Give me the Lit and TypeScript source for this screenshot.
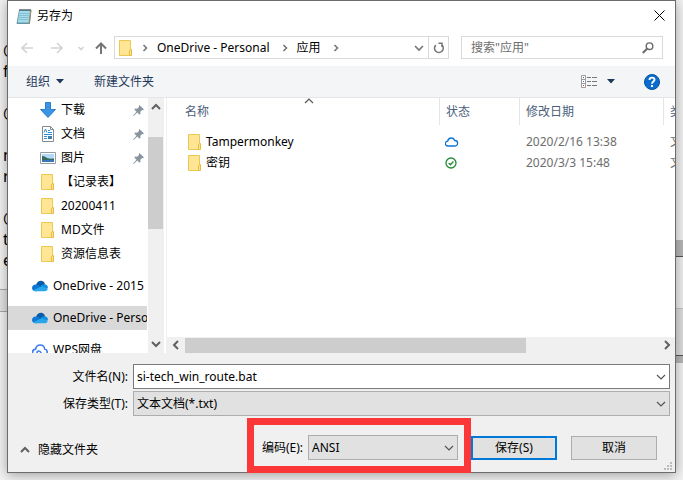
import { LitElement, html, svg, css, nothing } from "lit";
import { customElement, state } from "lit/decorators.js";

const folder = html`<svg class="icon" width="14" height="16" viewBox="0 0 14 16">
  <path d="M.5.500h11v15H.500z" fill="#ffe594" stroke="#ebc84f" />
  <path d="M10.500 15.500v-4.500l1-1.500h1v6z" fill="#ffe594" stroke="#e5bc3c" />
</svg>`;

const download = html`<svg class="icon" width="16" height="16" viewBox="0 0 16 16">
  <path d="M5.500.5h5v7h5L8 15.500.5 7.500h5z" fill="#3a96e4" stroke="#2b7fca" />
</svg>`;

const documents = html`<svg class="icon" width="16" height="16" viewBox="0 0 16 16">
  <path d="M2.500.5h8l3 3v12h-11z" fill="#fff" stroke="#7f8a93" />
  <path d="M10.500.5v3h3" fill="none" stroke="#7f8a93" />
  <path d="M4 6.500l1.500-3.500 1.500 3.500M8 4.500h2M8 6.500h4M4 8.500h8M4 10.500h3M4 12.500h3" fill="none" stroke="#2b8bd6" />
  <path d="M8 10h4v3H8z" fill="#3f7fae" />
</svg>`;

const pictures = html`<svg class="icon" width="16" height="16" viewBox="0 0 16 16">
  <path d="M.5 2.500h15v11H.5z" fill="#fff" stroke="#949ca3" />
  <path d="M2 4h12v8H2z" fill="#b3d9f7" />
  <path d="M2 6c3 0 4 2 7 2.500 2 .3 4 0 5 0V10H2z" fill="#356b5e" />
  <path d="M2 10h12v2H2z" fill="#3b77b5" />
</svg>`;

const oneDrive = html`<svg class="icon" width="16" height="16" viewBox="0 0 16 16">
  <path d="M4.200 6.500C5 4 7 2.700 9 2.800c2 .1 3.600 1.500 4 3.400l-4 4z" fill="#0a5cab" />
  <path d="M3.500 13.200C1.500 13.200 0 11.700 0 9.900c0-1.900 1.500-3.500 3.700-3.500 1.300 0 2 .3 3 .9l4 2.700-6 3.200z" fill="#0f78d4" />
  <path d="M8.500 8.500C9.500 7 11 6.200 12.500 6.300c2 .1 3.500 1.600 3.500 3.500l-4 1.200z" fill="#1490df" />
  <path d="M1 12.200l8.300-3.700L15.900 10.500c-.2 1.600-1.400 2.700-3 2.700H3.500c-1 0-1.900-.4-2.500-1z" fill="#28a8ea" />
</svg>`;

const wps = html`<svg class="icon" width="16" height="16" viewBox="0 0 16 16">
  <path d="M5 13.500H4a3.200 3.200 0 0 1-.4-6.400C4 4.500 6 3 8.200 3c2.400 0 4.200 1.700 4.500 4a3.300 3.300 0 0 1-.7 6.500c-3 0-2.500-4.500-5-4.500-1.400 0-2 1-2 2" fill="none" stroke="#3e7cf0" stroke-width="1.600" />
</svg>`;

const pin = html`<svg class="pin" width="11" height="11" viewBox="0 0 11 11">
  <path d="M6.500 0L11 4.500l-1 .6-.8-.2-1.900 1.900.2 1.900-1 1L4.300 7.500.8 10.700 0 11l.3-.8L3.500 6.700 1.300 4.500l1-1 1.900.2 1.900-1.900L5.900 1z" fill="#8795a1" />
</svg>`;

const shapes = {
  down: svg`<path d="M1 3l4 4 4-4" />`,
  up: svg`<path d="M1 7l4-4 4 4" />`,
  left: svg`<path d="M7 1L3 5l4 4" />`,
  right: svg`<path d="M3 1l4 4-4 4" />`,
  crumb: svg`<path d="M3.500 2l3 3-3 3" />`,
};
const chevron = (way: keyof typeof shapes, kind = "thin") =>
  html`<svg class="chev ${kind}" width="10" height="10" viewBox="0 0 10 10">${shapes[way]}</svg>`;

interface Place {
  name: string;
  icon: unknown;
  pinned?: boolean;
  root?: boolean;
  current?: boolean;
}

const places: Place[] = [
  { name: "下载", icon: download, pinned: true },
  { name: "文档", icon: documents, pinned: true },
  { name: "图片", icon: pictures, pinned: true },
  { name: "【记录表】", icon: folder },
  { name: "20200411", icon: folder },
  { name: "MD文件", icon: folder },
  { name: "资源信息表", icon: folder },
  { name: "OneDrive - 2015", icon: oneDrive, root: true },
  { name: "OneDrive - Personal", icon: oneDrive, root: true, current: true },
  { name: "WPS网盘", icon: wps, root: true },
];

const cloudOnly = html`<svg width="14" height="14" viewBox="0 0 14 14" role="img" aria-label="云端">
  <path d="M3.500 11H3a2.400 2.400 0 0 1-.3-4.900C3 4.200 4.500 3 6.300 3c1.600 0 2.900 1 3.400 2.500A2.700 2.700 0 0 1 10 11z" fill="none" stroke="#0a74d6" stroke-width="1.300" />
</svg>`;
const synced = html`<svg width="14" height="14" viewBox="0 0 14 14" role="img" aria-label="已同步">
  <circle cx="6" cy="7" r="5" fill="none" stroke="#1f8b34" stroke-width="1.300" />
  <path d="M3.700 7l1.700 1.700 3-3.200" fill="none" stroke="#1f8b34" stroke-width="1.300" />
</svg>`;

const files = [
  { name: "Tampermonkey", status: cloudOnly, date: "2020/2/16 13:38", type: "文件夹" },
  { name: "密钥", status: synced, date: "2020/3/3 15:48", type: "文件夹" },
];

@customElement("app-root")
export class AppRoot extends LitElement {
  @state() private fileName = "si-tech_win_route.bat";

  static styles = css`
    :host {
      display: block;
      position: relative;
      min-height: 100vh;
      box-sizing: border-box;
      padding: 0 7px 7px;
      overflow: hidden;
      background: #f3f3f3;
      color: #000;
      font: 12px/16px "Noto Sans", "Noto Sans CJK SC", sans-serif;
    }
    * { box-sizing: border-box; }
    button, input, select { font: inherit; color: inherit; margin: 0; padding: 0; }
    button { border: 0; background: none; }
    a { color: inherit; text-decoration: none; }
    svg { display: block; flex: none; }
    .chev { fill: none; stroke: #555; stroke-width: 1.2; }
    .chev.bold { stroke-width: 2; stroke: #606060; }
    .chev.mid { stroke-width: 1.6; stroke: #757575; }

    /* the editor window behind the dialog */
    .behind { position: absolute; inset: 0; display: flex; justify-content: space-between; }
    .behind .page { width: 50%; padding: 40px 0 0 3px; font-size: 16px; line-height: 21px; }
    .behind .page p { margin: 0; height: 21px; }
    .behind .bar { margin: 18px 0 0 -3px; height: 23px; background: #e4e4e4; border: 1px solid #a8a8a8; border-width: 1px 0; }
    .behind .frames { width: 50%; padding-top: 240px; }
    .behind .frames div { height: 16px; background: #b8b8b8; }
    .behind .frames .pane { height: 53px; background: #f0f0f0; border-top: 1px solid #555; border-bottom: 1px solid #c4c4c4; }
    .behind .frames .foot { height: 47px; background: #dedede; border-bottom: 1px solid #555; }
    .behind .frames .shade { height: 7px; }

    .dialog {
      position: relative;
      display: flex;
      flex-direction: column;
      background: #fff;
      border: 1px solid #6c6c6c;
      box-shadow: 0 2px 12px rgba(0, 0, 0, 0.35);
    }
    .title { display: flex; align-items: center; gap: 5px; height: 30px; padding: 0 10px 0 8px; }
    .title h1 { flex: 1; margin: 0; font: inherit; }
    .title button { margin-bottom: 2px; }

    .nav { display: flex; align-items: center; height: 35px; padding: 5px 12px 7px 4px; }
    .arrows { display: flex; align-items: center; width: 102px; }
    .arrows button { width: 30px; display: grid; place-items: center; }
    .arrows button:nth-child(3) { width: 18px; }
    .arrows button:nth-child(4) { width: 22px; }
    .arrows svg { stroke: #d4d4d4; fill: none; stroke-width: 1.6; }
    .arrows .live { stroke: #757575; stroke-width: 2; }
    .address { flex: 1; display: flex; align-items: center; height: 23px; border: 1px solid #d9d9d9; padding-left: 4px; }
    .crumbs { flex: 1; display: flex; align-items: center; gap: 7px; }
    .crumbs a { margin-right: 3px; }
    .address button { height: 21px; width: 19px; display: grid; place-items: center; }
    .address .refresh { border-left: 1px solid #d9d9d9; width: 20px; }
    .search { display: flex; align-items: center; width: 202px; height: 23px; margin-left: 12px; padding: 0 8px 0 9px; border: 1px solid #d9d9d9; }
    .search input { flex: 1; min-width: 0; border: 0; outline: 0; background: none; }
    .search input::placeholder { color: #6d6d6d; }

    .tools { display: flex; align-items: center; height: 32px; padding: 0 15px 0 18px; background: #f4f5f7; border-bottom: 1px solid #e3e5e8; color: #1e395b; }
    .tools button { display: flex; align-items: center; gap: 6px; }
    .tools .new { margin-left: 30px; }
    .tools .view { margin-left: auto; gap: 10px; }
    .tools .help { margin-left: 29px; }

    .body { display: flex; height: 255px; }
    .side { flex: none; width: 139px; overflow: hidden; }
    .side ul { list-style: none; margin: 0; padding: 0; }
    .side a { display: flex; align-items: center; height: 24px; padding-left: 32px; white-space: nowrap; }
    .side .slot { width: 16px; margin-right: 5px; display: grid; place-items: center; }
    .side .root { margin-top: 8px; }
    .side .root a { padding-left: 24px; }
    .side .current a { background: #d9d9d9; }
    .side .pin { margin: 0 3px 0 auto; }
    .vbar { flex: none; display: flex; flex-direction: column; align-items: center; justify-content: space-between; width: 16px; margin-left: 1px; padding: 4px 0; background: #f0f0f0; }
    .vbar .thumb { width: 15px; height: 92px; margin: 0 1px 86px 0; background: #cdcdcd; }
    .main { flex: 1; min-width: 0; display: flex; flex-direction: column; margin-left: 2px; border-left: 1px solid #f0f0f0; }
    .scroll { position: relative; flex: 1; overflow: hidden; }
    .sort { position: absolute; left: 137px; top: -2px; }
    table { border-collapse: separate; border-spacing: 0; table-layout: fixed; width: 600px; }
    th, td { padding: 0; font-weight: 400; text-align: left; white-space: nowrap; }
    th { height: 27px; color: #4c607a; border-right: 1px solid #e5e5e5; padding-left: 6px; }
    th:first-child { padding-left: 18px; }
    td { height: 21px; color: #6d6d6d; padding-left: 6px; }
    td:first-child { padding-left: 21px; color: #000; }
    td:nth-child(2) { padding-left: 5px; }
    .file { display: flex; align-items: center; gap: 4px; }
    .lead td { height: 6px; }
    .name { width: 273px; }
    .status { width: 80px; }
    .date { width: 144px; }
    .hbar { display: flex; align-items: center; height: 16px; padding: 0 3px 0 4px; background: #f0f0f0; gap: 4px; }
    .hbar .track { flex: 1; height: 15px; }
    .hbar .thumb { width: 72%; height: 15px; background: #cdcdcd; }

    .form { background: #f0f0f0; padding-top: 11px; }
    .field { display: grid; grid-template-columns: 120px 1fr; column-gap: 5px; align-items: center; margin-bottom: 2px; padding-right: 5px; }
    .field label { text-align: right; }
    .combo { position: relative; display: flex; }
    .combo input, .combo select { appearance: none; flex: 1; min-width: 0; height: 25px; padding: 0 22px 0 3px; border: 1px solid #7a7a7a; border-radius: 0; background: #fff; outline: 0; }
    .combo select { background: #e1e1e1; border-color: #adadad; }
    .combo .chev { position: absolute; right: 4px; top: 8px; pointer-events: none; }
    .actions { position: relative; display: flex; align-items: center; height: 54px; padding: 5px 18px 0 12px; }
    .hide { display: flex; align-items: center; gap: 8px; margin-right: auto; padding-top: 5px; }
    .encoding { position: relative; display: flex; align-items: center; gap: 5px; margin-right: 13px; }
    .encoding::after { content: ""; position: absolute; inset: -17px -13px -13px -15px; border: 7px solid #fb3737; pointer-events: none; }
    .encoding .combo { width: 150px; }
    .push { width: 86px; height: 24px; border: 1px solid #adadad; background: #e1e1e1; }
    .push.main-action { border: 2px solid #0078d7; margin-right: 14px; }
    .grip { position: absolute; right: 3px; bottom: 2px; fill: #bcbcbc; }
  `;

  private place(p: Place) {
    return html`<li class="${p.root ? "root" : ""} ${p.current ? "current" : ""}">
      <a href="#"><span class="slot">${p.icon}</span>${p.name}${p.pinned ? pin : nothing}</a>
    </li>`;
  }

  render() {
    return html`
      <div class="behind" aria-hidden="true">
        <div class="page">
          ${["@", "f", "", "@", "", "n", "r", "", "@", "t", "e"].map((t) => html`<p>${t}</p>`)}
          <div class="bar"></div>
        </div>
        <div class="frames">
          <div></div><div class="pane"></div><div class="foot"></div><div class="shade"></div>
        </div>
      </div>
      <section class="dialog" role="dialog" aria-labelledby="title">
        <header class="title">
          <svg width="16" height="16" viewBox="0 0 16 16">
            <path d="M3.500 2h11.500l-1.500 13.500H1z" fill="#7cc0d4" stroke="#557f8d" stroke-width=".8" />
            <path d="M3.600 3h10l-1.200 11H1.800z" fill="#a6dcea" />
            <path d="M3.500 5.500h9.500M3.300 7.500h9.500M3 9.500h9.500M2.800 11.500h9.500" stroke="#74b6cb" stroke-width=".7" />
            <path d="M3.500 2h11" stroke="#44555c" stroke-width="2" stroke-dasharray="1 1" />
            <path d="M14.800 2.500L13.300 15.500" stroke="#a9865a" stroke-width="1" />
          </svg>
          <h1 id="title">另存为</h1>
          <button aria-label="关闭">
            <svg width="11" height="11" viewBox="0 0 11 11"><path d="M.5.5l10 10M10.500.5l-10 10" stroke="#000" stroke-width="1" /></svg>
          </button>
        </header>

        <div class="nav">
          <div class="arrows">
            <button aria-label="后退"><svg width="12" height="12" viewBox="0 0 12 12"><path d="M12 6H1M6 1L1 6l5 5" /></svg></button>
            <button aria-label="前进"><svg width="12" height="12" viewBox="0 0 12 12"><path d="M0 6h11M6 1l5 5-5 5" /></svg></button>
            <button aria-label="最近位置"><svg width="8" height="8" viewBox="0 0 8 8"><path d="M1.500 3l2.500 2.500 2.500-2.500" /></svg></button>
            <button aria-label="上移"><svg class="live" width="12" height="12" viewBox="0 0 12 12"><path d="M6 12V1.500M1 6.500l5-5 5 5" /></svg></button>
          </div>
          <div class="address">
            <nav class="crumbs">
              ${folder}${chevron("crumb", "mid")}
              <a href="#">OneDrive - Personal</a>${chevron("crumb", "mid")}
              <a href="#">应用</a>${chevron("crumb", "mid")}
            </nav>
            <button aria-label="以前的位置">${chevron("down", "mid")}</button>
            <button class="refresh" aria-label="刷新">
              <svg width="12" height="12" viewBox="0 0 12 12" fill="none" stroke="#757575"><path d="M2.800 3.200a4.300 4.300 0 1 0 6.200 0" stroke-width="1.700" /><path d="M5.500 1.200h4.200M9 1v4" stroke-width="1.500" /></svg>
            </button>
          </div>
          <label class="search">
            <input type="search" aria-label="搜索" placeholder='搜索"应用"' />
            <svg width="12" height="12" viewBox="0 0 12 12"><circle cx="7.500" cy="4.200" r="3.300" fill="none" stroke="#6a6a6a" stroke-width="1.400" /><path d="M5 6.800L.8 11" stroke="#6a6a6a" stroke-width="2" /></svg>
          </label>
        </div>

        <div class="tools">
          <button>组织<svg width="8" height="5" viewBox="0 0 8 5"><path d="M0 0h8L4 4.500z" fill="#1e395b" /></svg></button>
          <button class="new">新建文件夹</button>
          <button class="view" aria-label="更改视图">
            <svg width="16" height="13" viewBox="0 0 16 13">
              <path d="M.5.5h4v12h-4zM.5 4.500h4M.5 8.500h4" fill="#fff" stroke="#9a9a9a" />
              <path d="M6 2.500h4M11 2.500h5M6 6.500h4M11 6.500h5M6 10.500h4M11 10.500h5" stroke="#777" />
              <path d="M2 2h1v1H2z" fill="#555" /><path d="M2 6h1v1H2z" fill="#2878d0" /><path d="M2 10h1v1H2z" fill="#d03030" />
            </svg>
            <svg width="8" height="5" viewBox="0 0 8 5"><path d="M0 0h8L4 4.500z" fill="#1e395b" /></svg>
          </button>
          <button class="help" aria-label="帮助">
            <svg width="16" height="16" viewBox="0 0 16 16">
              <circle cx="8" cy="8" r="7.500" fill="#0a6ccc" stroke="#07529c" />
              <path d="M5.500 6C5.500 2.800 10.500 3 10.500 5.800 10.500 7.600 8 7.600 8 9.700" fill="none" stroke="#fff" stroke-width="1.900" />
              <path d="M7 11h2v2H7z" fill="#fff" />
            </svg>
          </button>
        </div>

        <div class="body">
          <nav class="side"><ul>${places.map((p) => this.place(p))}</ul></nav>
          <div class="vbar">${chevron("up", "bold")}<div class="thumb"></div>${chevron("down", "bold")}</div>
          <div class="main">
            <div class="scroll">
              <span class="sort">${chevron("up")}</span>
              <table>
                <colgroup><col class="name" /><col class="status" /><col class="date" /><col /></colgroup>
                <thead><tr><th>名称</th><th>状态</th><th>修改日期</th><th>类型</th></tr></thead>
                <tbody>
                  <tr class="lead"><td colspan="4"></td></tr>
                  ${files.map((f) => html`<tr>
                    <td><span class="file">${folder}${f.name}</span></td>
                    <td>${f.status}</td><td>${f.date}</td><td>${f.type}</td>
                  </tr>`)}
                </tbody>
              </table>
            </div>
            <div class="hbar">${chevron("left", "bold")}<div class="track"><div class="thumb"></div></div>${chevron("right", "bold")}</div>
          </div>
        </div>

        <form class="form" @submit=${(e: Event) => e.preventDefault()}>
          <div class="field">
            <label for="file">文件名(N):</label>
            <div class="combo">
              <input id="file" type="text" .value=${this.fileName}
                @input=${(e: Event) => (this.fileName = (e.target as HTMLInputElement).value)} />
              ${chevron("down")}
            </div>
          </div>
          <div class="field">
            <label for="type">保存类型(T):</label>
            <div class="combo"><select id="type"><option>文本文档(*.txt)</option></select>${chevron("down")}</div>
          </div>
          <div class="actions">
            <button class="hide" type="button">${chevron("up", "bold")}隐藏文件夹</button>
            <div class="encoding">
              <label for="enc">编码(E):</label>
              <div class="combo"><select id="enc"><option>ANSI</option></select>${chevron("down")}</div>
            </div>
            <button class="push main-action">保存(S)</button>
            <button class="push" type="button">取消</button>
            <svg class="grip" width="8" height="8" viewBox="0 0 8 8"><path d="M6 0h2v2H6zM3 3h2v2H3zM6 3h2v2H6zM0 6h2v2H0zM3 6h2v2H3zM6 6h2v2H6z" /></svg>
          </div>
        </form>
      </section>
    `;
  }
}
